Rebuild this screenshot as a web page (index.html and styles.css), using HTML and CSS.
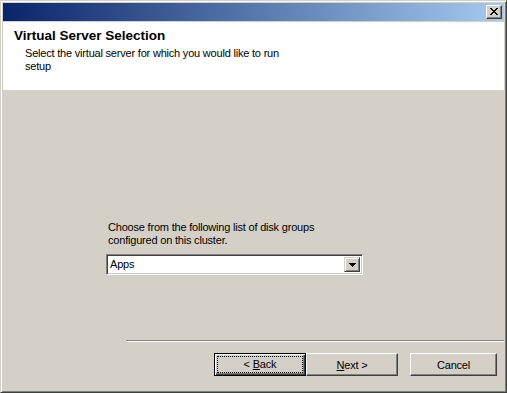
FILE: index.html
```html
<!DOCTYPE html>
<html lang="en">
<head>
    <meta charset="UTF-8">
    <title>Virtual Server Selection</title>
    <link rel="stylesheet" href="styles.css">
</head>
<body>
    <div class="window">
        <div class="titlebar">
            <button class="close-btn" type="button">
                <svg width="8" height="7" viewBox="0 0 8 7">
                    <path d="M0 0h2v1h1v1h2V1h1V0h2v1H7v1H6v1H5v1h1v1h1v1h1v1H6V6H5V5H3v1H2v1H0V6h1V5h1V4h1V3H2V2H1V1H0z" fill="#000"/>
                </svg>
            </button>
        </div>

        <div class="client">
            <div class="header">
                <h1>Virtual Server Selection</h1>
                <p>Select the virtual server for which you would like to run<br>setup</p>
            </div>

            <div class="body">
                <div class="content">
                    <p class="label">Choose from the following list of disk groups<br>configured on this cluster.</p>
                    <div class="combo">
                        <span class="combo-value">Apps</span>
                        <span class="combo-arrow">
                            <svg width="7" height="4" viewBox="0 0 7 4">
                                <path d="M0 0h7v1H6v1H5v1H4v1H3V3H2V2H1V1H0z" fill="#000"/>
                            </svg>
                        </span>
                    </div>
                </div>

                <div class="divider"></div>

                <div class="buttons">
                    <button class="btn btn-default" type="button"><span class="focus">&lt; <u>B</u>ack</span></button>
                    <button class="btn" type="button"><u>N</u>ext &gt;</button>
                    <button class="btn btn-cancel" type="button">Cancel</button>
                </div>
            </div>
        </div>
    </div>
</body>
</html>
```

FILE: styles.css
```css
* {
    margin: 0;
    padding: 0;
    box-sizing: border-box;
}

body {
    font-family: "Liberation Sans", Arial, sans-serif;
    font-size: 11px;
    letter-spacing: -0.2px;
    color: #000;
    background: #d4d0c8;
}

.window {
    width: 507px;
    height: 393px;
    background: #d4d0c8;
    border: 1px solid;
    border-color: #d4d0c8 #404040 #404040 #d4d0c8;
    box-shadow: inset 1px 1px #fff, inset -1px -1px #808080;
    padding: 2px;
    display: flex;
    flex-direction: column;
}

.titlebar {
    height: 18px;
    margin-bottom: 1px;
    background: linear-gradient(to right, #0a246a, #a6caf0);
    display: flex;
    justify-content: flex-end;
    align-items: flex-start;
    padding: 2px 2px 0 0;
}

.close-btn {
    width: 16px;
    height: 14px;
    background: #d4d0c8;
    border: 1px solid;
    border-color: #fff #404040 #404040 #fff;
    box-shadow: inset -1px -1px #808080;
    display: flex;
    align-items: center;
    justify-content: center;
    padding: 0 1px 1px 0;
}

.close-btn svg {
    display: block;
}

.client {
    flex: 1;
    display: flex;
    flex-direction: column;
}

.header {
    height: 68px;
    background: #fff;
    padding: 6px 0 0 11px;
}

.header h1 {
    font-size: 13.5px;
    font-weight: bold;
    letter-spacing: 0;
    line-height: 16px;
    margin-bottom: 3px;
}

.header p {
    line-height: 13px;
    padding-left: 11px;
}

.body {
    flex: 1;
    display: flex;
    flex-direction: column;
}

.content {
    padding: 131px 0 0 103px;
    height: 250px;
}

.label {
    line-height: 13px;
    padding-left: 2px;
    margin-bottom: 7px;
}

.combo {
    width: 257px;
    height: 21px;
    background: #fff;
    border: 1px solid;
    border-color: #808080 #fff #fff #808080;
    box-shadow: inset 1px 1px #404040, inset -1px -1px #d4d0c8;
    display: flex;
    align-items: center;
    padding: 2px;
}

.combo-value {
    flex: 1;
    padding-left: 1px;
    line-height: 15px;
}

.combo-arrow {
    width: 16px;
    height: 15px;
    background: #d4d0c8;
    border: 1px solid;
    border-color: #d4d0c8 #404040 #404040 #d4d0c8;
    box-shadow: inset 1px 1px #fff, inset -1px -1px #808080;
    display: flex;
    align-items: center;
    justify-content: center;
}

.divider {
    margin-left: 123px;
    height: 2px;
    border-top: 1px solid #808080;
    border-bottom: 1px solid #fff;
}

.buttons {
    display: flex;
    padding: 11px 0 0 211px;
}

.btn {
    width: 92px;
    height: 23px;
    background: #d4d0c8;
    font-family: inherit;
    font-size: 11px;
    letter-spacing: -0.2px;
    color: #000;
    text-align: center;
    border: 1px solid;
    border-color: #fff #404040 #404040 #fff;
    box-shadow: inset -1px -1px #808080;
}

.btn-default {
    border-color: #000;
    box-shadow: inset 1px 1px #fff, inset -1px -1px #404040, inset -2px -2px #808080;
    padding: 3px;
}

.focus {
    display: block;
    height: 15px;
    line-height: 15px;
    outline: 1px dotted #000;
}

.btn-cancel {
    width: 87px;
    margin-left: 12px;
}
```
